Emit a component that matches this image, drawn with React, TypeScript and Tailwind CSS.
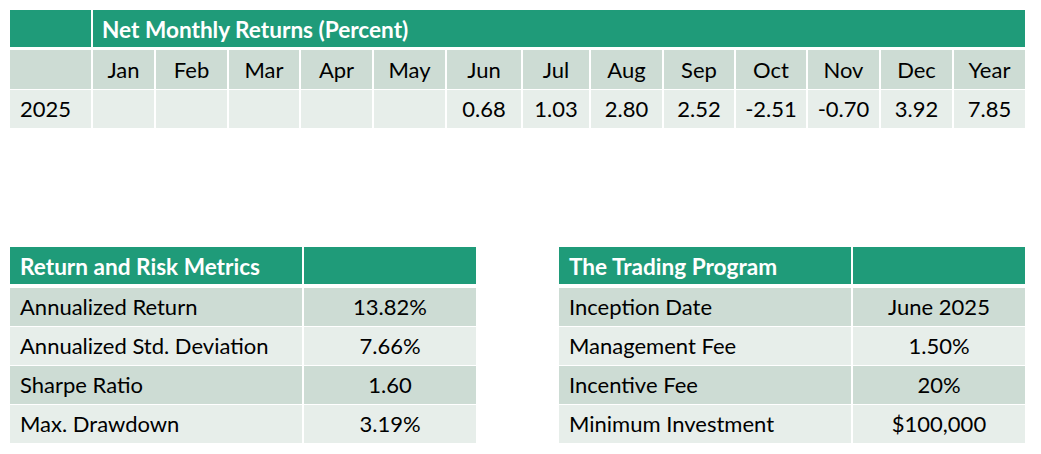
const months = ["Jan", "Feb", "Mar", "Apr", "May", "Jun", "Jul", "Aug", "Sep", "Oct", "Nov", "Dec", "Year"];
const values = ["", "", "", "", "", "0.68", "1.03", "2.80", "2.52", "-2.51", "-0.70", "3.92", "7.85"];

const metrics = [
  ["Annualized Return", "13.82%"],
  ["Annualized Std. Deviation", "7.66%"],
  ["Sharpe Ratio", "1.60"],
  ["Max. Drawdown", "3.19%"],
];

const program = [
  ["Inception Date", "June 2025"],
  ["Management Fee", "1.50%"],
  ["Incentive Fee", "20%"],
  ["Minimum Investment", "$100,000"],
];

const cols = "grid-cols-[81px_61px_71px_70px_71px_71px_74px_66px_71px_70px_70px_71px_71px_71px]";

const InfoTable = ({ title, rows }: { title: string; rows: string[][] }) => (
  <div className="w-[466px]">
    <div className="grid grid-cols-[292px_172px] gap-x-[2px] h-[37px]">
      <div className="bg-[#1f9b79] text-white font-bold text-[22.6px] pl-[10px] pt-[4px] flex items-center">{title}</div>
      <div className="bg-[#1f9b79]" />
    </div>
    <div className="mt-[4px] flex flex-col gap-[1.5px]">
      {rows.map(([label, value], i) => (
        <div key={label} className="grid grid-cols-[292px_172px] gap-x-[2px] h-[37.5px]">
          <div className={`${i % 2 === 0 ? "bg-[#cddcd4]" : "bg-[#e7eeea]"} pl-[10px] flex items-center`}>{label}</div>
          <div className={`${i % 2 === 0 ? "bg-[#cddcd4]" : "bg-[#e7eeea]"} flex items-center justify-center`}>{value}</div>
        </div>
      ))}
    </div>
  </div>
);

export default function App() {
  return (
    <div className="w-[1041px] h-[454px] bg-white text-black text-[22px] leading-none font-['Lato',sans-serif] pt-[10px] px-[10px]">
      {/* Monthly returns */}
      <div className="w-[1015px]">
        <div className="grid grid-cols-[81px_932px] gap-x-[2px] h-[37px]">
          <div className="bg-[#1f9b79]" />
          <div className="bg-[#1f9b79] text-white font-bold text-[22.6px] pl-[9px] pt-[3px] flex items-center">Net Monthly Returns (Percent)</div>
        </div>
        <div className={`grid ${cols} gap-x-[2px] h-[39px] mt-[3px]`}>
          <div className="bg-[#cddcd4]" />
          {months.map((m) => (
            <div key={m} className="bg-[#cddcd4] flex items-center justify-center">{m}</div>
          ))}
        </div>
        <div className={`grid ${cols} gap-x-[2px] h-[38px] mt-[1px]`}>
          <div className="bg-[#e7eeea] pl-[10px] flex items-center">2025</div>
          {values.map((v, i) => (
            <div key={i} className="bg-[#e7eeea] flex items-center justify-center">{v}</div>
          ))}
        </div>
      </div>

      {/* Lower tables */}
      <div className="mt-[119px] flex gap-[83px]">
        <InfoTable title="Return and Risk Metrics" rows={metrics} />
        <InfoTable title="The Trading Program" rows={program} />
      </div>
    </div>
  );
}
